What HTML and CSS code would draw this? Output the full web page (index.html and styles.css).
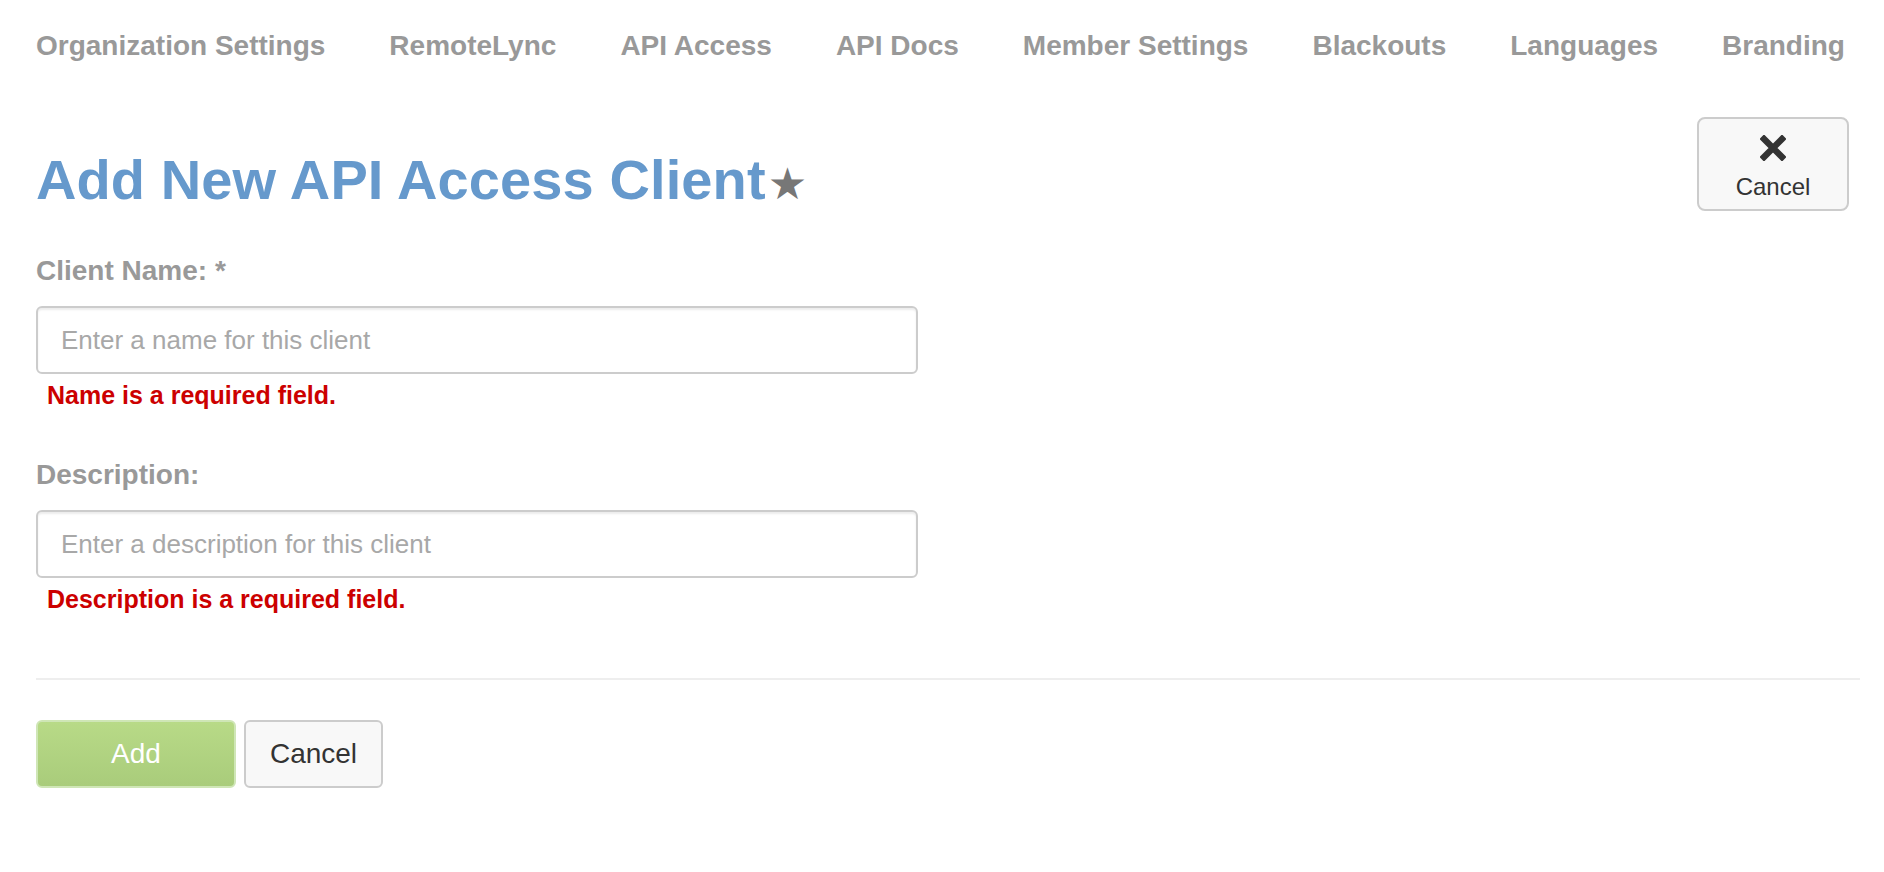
FILE: index.html
```html
<!DOCTYPE html>
<html>
<head>
<meta charset="utf-8">
<title>Add New API Access Client</title>
<link rel="stylesheet" href="styles.css">
</head>
<body>
<div class="page">
  <nav class="tabs">
    <a class="tab">Organization Settings</a>
    <a class="tab">RemoteLync</a>
    <a class="tab">API Access</a>
    <a class="tab">API Docs</a>
    <a class="tab">Member Settings</a>
    <a class="tab">Blackouts</a>
    <a class="tab">Languages</a>
    <a class="tab">Branding</a>
  </nav>

  <div class="header-row">
    <h1 class="title">Add New API Access Client<span class="star">★</span></h1>
    <button class="top-cancel" type="button">
      <svg class="x-icon" width="26" height="26" viewBox="0 0 26 26" aria-hidden="true">
        <path d="M4 4 L22 22 M22 4 L4 22" stroke="#333" stroke-width="6.5" stroke-linecap="square" fill="none"/>
      </svg>
      <span>Cancel</span>
    </button>
  </div>

  <form class="form">
    <div class="field">
      <label class="label">Client Name: *</label>
      <input class="input" type="text" placeholder="Enter a name for this client">
      <div class="error">Name is a required field.</div>
    </div>
    <div class="field field-second">
      <label class="label">Description:</label>
      <input class="input" type="text" placeholder="Enter a description for this client">
      <div class="error">Description is a required field.</div>
    </div>
    <hr class="divider">
    <div class="actions">
      <button class="btn btn-add" type="button">Add</button>
      <button class="btn btn-cancel" type="button">Cancel</button>
    </div>
  </form>
</div>
</body>
</html>
```

FILE: styles.css
```css
html, body {
  margin: 0;
  padding: 0;
  background: #ffffff;
}

body {
  font-family: "Liberation Sans", Arial, Helvetica, sans-serif;
  color: #333333;
}

.page {
  padding: 0 24px 0 36px;
}

.tabs {
  display: flex;
  gap: 64px;
  padding-top: 26px;
  height: 40px;
}

.tab {
  font-size: 28px;
  font-weight: bold;
  line-height: 40px;
  color: #999999;
  text-decoration: none;
  white-space: nowrap;
}

.header-row {
  display: flex;
  justify-content: space-between;
  align-items: flex-start;
  margin-top: 51px;
  height: 94px;
}

.title {
  margin: 32px 0 0 0;
  font-size: 56px;
  line-height: 62px;
  height: 62px;
  font-weight: bold;
  color: #6699cc;
  letter-spacing: 0.1px;
}

.star {
  font-family: "DejaVu Sans", sans-serif;
  font-size: 44px;
  line-height: 0;
  font-weight: normal;
  color: #777777;
  margin-left: 2px;
}

.top-cancel {
  box-sizing: border-box;
  width: 152px;
  height: 94px;
  margin-right: 11px;
  border: 2px solid #cccccc;
  border-radius: 8px;
  background: #f8f8f8;
  display: flex;
  flex-direction: column;
  align-items: center;
  justify-content: flex-start;
  padding: 16px 0 0 0;
  font-family: "Liberation Sans", Arial, sans-serif;
  font-size: 24px;
  color: #333333;
  line-height: 28px;
}

.x-icon {
  display: block;
  margin-bottom: 12px;
}

.form {
  margin-top: 40px;
}

.field {
  display: flex;
  flex-direction: column;
  align-items: flex-start;
}

.field-second {
  margin-top: 45px;
}

.label {
  font-size: 28px;
  line-height: 40px;
  font-weight: bold;
  color: #999999;
}

.input {
  box-sizing: border-box;
  width: 882px;
  height: 68px;
  margin-top: 15px;
  padding: 0 23px;
  border: 2px solid #cccccc;
  border-radius: 6px;
  box-shadow: inset 0 2px 2px rgba(0, 0, 0, 0.075);
  font-family: "Liberation Sans", Arial, sans-serif;
  font-size: 26px;
  color: #555555;
  background: #ffffff;
  outline: none;
}

.input::placeholder {
  color: #a8a8a8;
}

.error {
  margin-top: 6px;
  padding-left: 11px;
  font-size: 25px;
  line-height: 30px;
  font-weight: bold;
  color: #cc0000;
}

.divider {
  margin: 64px 0 0 0;
  border: 0;
  border-top: 2px solid #eeeeee;
  height: 0;
}

.actions {
  display: flex;
  gap: 8px;
  margin-top: 40px;
}

.btn {
  box-sizing: border-box;
  height: 68px;
  border-radius: 6px;
  font-family: "Liberation Sans", Arial, sans-serif;
  font-size: 28px;
  padding: 0;
}

.btn-add {
  width: 200px;
  border: 2px solid #cfe6b6;
  background: linear-gradient(#b8da87, #a9cc7b);
  color: #ffffff;
}

.btn-cancel {
  width: 139px;
  border: 2px solid #cccccc;
  background: #f8f8f8;
  color: #333333;
}
```
